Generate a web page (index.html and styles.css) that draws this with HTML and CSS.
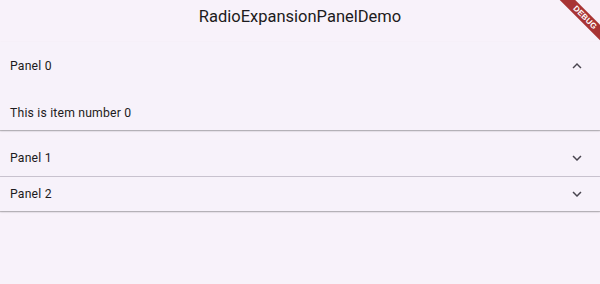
FILE: index.html
```html
<!DOCTYPE html>
<html>
<head>
<meta charset="utf-8">
<link rel="stylesheet" href="styles.css">
</head>
<body>
<div class="app">
  <header class="appbar"><h1 class="title">RadioExpansionPanelDemo</h1></header>
  <div class="panels">
    <section class="panel expanded">
      <div class="panel-head head-lg">
        <span class="label">Panel 0</span>
        <svg class="chev" viewBox="0 0 24 24" width="18" height="18"><path d="M7.41 15.41 12 10.83l4.59 4.58L18 14l-6-6-6 6z" fill="#49454f"/></svg>
      </div>
      <div class="panel-body"><span class="label">This is item number 0</span></div>
    </section>
    <section class="panel collapsed first">
      <div class="panel-head">
        <span class="label">Panel 1</span>
        <svg class="chev" viewBox="0 0 24 24" width="18" height="18"><path d="M7.41 8.59 12 13.17l4.59-4.58L18 10l-6 6-6-6z" fill="#49454f"/></svg>
      </div>
    </section>
    <section class="panel collapsed last">
      <div class="panel-head head-sm">
        <span class="label">Panel 2</span>
        <svg class="chev" viewBox="0 0 24 24" width="18" height="18"><path d="M7.41 8.59 12 13.17l4.59-4.58L18 10l-6 6-6-6z" fill="#49454f"/></svg>
      </div>
    </section>
  </div>
  <div class="debug"><span>DEBUG</span></div>
</div>
</body>
</html>
```
FILE: styles.css
```css
html, body { margin: 0; padding: 0; }
body {
  width: 600px; height: 284px; overflow: hidden;
  background: #fdf7ff;
  font-family: Roboto, "Liberation Sans", sans-serif;
  color: #1d1b20;
}
.app { position: relative; width: 600px; height: 284px; background: #f8f2fa; }
.appbar { height: 42px; display: flex; align-items: center; justify-content: center; }
.title { margin: 0; font-size: 16.5px; font-weight: 400; line-height: 1; position: relative; top: -4px; }
.panels { display: flex; flex-direction: column; }
.panel { background: #f7f2fa; box-shadow: 0 1px 1px rgba(0,0,0,0.2), 0 1px 2px rgba(0,0,0,0.12); }
.panel.expanded { margin-bottom: 10px; }
.panel.collapsed.first { border-bottom: 1px solid #cac4d0; box-shadow: none; }
.panel-head { height: 36px; display: flex; align-items: center; justify-content: space-between; padding: 0 14px 0 10px; }
.head-lg { height: 48px; }
.head-sm { height: 34px; padding-top: 0; }
.panel-body { height: 34px; padding: 6px 10px 0; display: flex; align-items: center; }
.label { font-size: 12.2px; letter-spacing: 0.2px; }
.chev { display: block; }
.debug {
  position: absolute; top: 0; right: 0; width: 60px; height: 60px; overflow: hidden;
}
.debug span {
  position: absolute; top: 12px; left: 5px; width: 80px; height: 11px;
  background: #a83434; color: #fff; font-size: 8px; font-weight: 700;
  text-align: center; line-height: 11px; transform: rotate(45deg); letter-spacing: 0.2px;
  font-family: "Liberation Sans", sans-serif;
}
```
